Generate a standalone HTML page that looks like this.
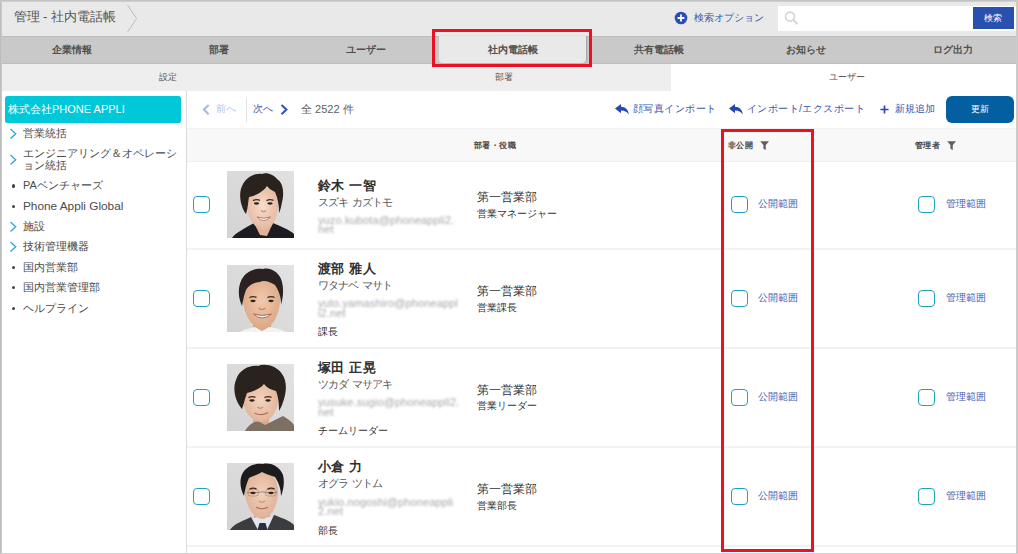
<!DOCTYPE html>
<html lang="ja">
<head>
<meta charset="utf-8">
<title>管理 - 社内電話帳</title>
<style>
*{box-sizing:border-box;margin:0;padding:0}
html,body{width:1018px;height:554px;overflow:hidden;background:#fff}
body{position:relative;font-family:"Liberation Sans",sans-serif;color:#444;font-size:12px;line-height:1}
.abs{position:absolute;white-space:nowrap}
a{text-decoration:none;color:inherit}
/* frame */
#f-l{left:0;top:0;width:2px;height:554px;background:linear-gradient(90deg,#bdbdbd 0,#bdbdbd 55%,#d8d8d8 100%)}
#f-t{left:0;top:0;width:1018px;height:2px;background:linear-gradient(180deg,#c2c2c2 0,#c2c2c2 50%,#dcdcdc 100%)}
#f-r{left:1016px;top:0;width:2px;height:554px;background:linear-gradient(90deg,#d4d4d4,#bdbdbd)}
#f-b{left:0;top:553px;width:1018px;height:1px;background:#d0d0d0}
/* header */
#hdr{left:2px;top:1px;width:1014px;height:36px;background:#e9e9e9}
#title{left:13.5px;top:10px;font-size:13px;color:#555;letter-spacing:0}
#sbox{left:778px;top:5.7px;width:238px;height:25.4px;background:#fff}
#sbtn{left:973px;top:7px;width:40.8px;height:21.8px;background:#2850ae;color:#fff;font-size:9px;text-align:center;line-height:22.6px}
#sopt{left:694px;top:12.5px;font-size:10px;color:#3355aa}
/* nav */
#nav{left:2px;top:36.4px;width:1014px;height:27.6px;background:#c9c9c9;border-top:1px solid #bcbcbc;border-bottom:1px solid #bebebe}
.tab{top:37px;height:26px;line-height:26px;font-size:10px;font-weight:bold;color:#505050;text-align:center}
#tab-act{left:438.7px;top:36px;width:147.8px;height:27px;background:#e9e9e9;border-radius:0 0 4px 4px;box-shadow:1px 0 1.5px rgba(0,0,0,.2)}
/* subnav */
#sub{left:2px;top:64px;width:1014px;height:27px;background:#eeeeee}
#sub-act{left:671px;top:64px;width:345px;height:27px;background:#fff}
.stab{top:63px;height:28px;line-height:28px;font-size:9px;color:#555;text-align:center}
/* sidebar */
#side-b{left:186px;top:91px;width:1px;height:463px;background:#dcdcdc}
#org{left:5px;top:96px;width:176px;height:27px;background:#00c8d8;color:#fff;font-size:11px;line-height:27px;padding-left:3px;border-radius:2.5px}
.ti{left:23px;font-size:11px;color:#4a4a4a}
.chev{left:8px;width:8px;height:10px}
.dot{left:11.5px;width:3.6px;height:3.6px;border-radius:50%;background:#444}
/* toolbar */
.lnk{color:#3a55ad;font-size:10.45px}
#upd{left:945.6px;top:95.8px;width:68.3px;height:27.3px;background:#035f9f;border-radius:6px;color:#fff;font-size:8.5px;text-align:center;line-height:27.3px}
/* table */
#thead{left:187px;top:128px;width:829px;height:34px;background:#f8f8f8;border-top:1px solid #f1f1f1;border-bottom:1px solid #efefef}
.th{top:141.4px;font-size:8.3px;letter-spacing:0.4px;font-weight:bold;color:#484848}
.sep{left:187px;width:829px;height:2px;background:#f2f2f2}
.cb{width:17.2px;height:17px;border:1.4px solid #22a2c0;border-radius:4px;background:#fff}
.ph{left:227px;width:67px;height:67px;overflow:hidden}
.nm{left:318px;font-size:13.4px;letter-spacing:0.45px;font-weight:bold;color:#303030}
.kn{left:317.5px;font-size:10.5px;letter-spacing:-0.85px;word-spacing:1.5px;color:#555}
.em{left:318px;font-size:11px;color:#a6a6a6;filter:blur(1.1px);line-height:9.8px;white-space:nowrap;letter-spacing:0.12px}
.jt{left:318px;font-size:10px;color:#333}
.dp{left:477px;font-size:12px;color:#333}
.ds{left:477px;font-size:10.2px;color:#333}
.rl{font-size:10px;color:#4560b4}
.red{border:3px solid #ec1020}
</style>
</head>
<body>
<div class="abs" id="hdr"></div>
<div class="abs" id="title">管理 - 社内電話帳</div>
<svg class="abs" style="left:126px;top:4px" width="14" height="30" viewBox="0 0 14 30"><path d="M1.5 1 L10.6 14.5 L1.5 28" fill="none" stroke="#bdbdbd" stroke-width="1"/></svg>
<svg class="abs" style="left:674px;top:11px" width="14" height="14" viewBox="0 0 14 14"><circle cx="7" cy="7" r="6.3" fill="#2a4db3"/><path d="M7 3.6v6.8M3.6 7h6.8" stroke="#fff" stroke-width="1.8"/></svg>
<a class="abs" id="sopt">検索オプション</a>
<div class="abs" id="sbox"></div>
<svg class="abs" style="left:784px;top:10px" width="16" height="16" viewBox="0 0 16 16"><circle cx="6" cy="6.6" r="4.5" fill="none" stroke="#d4d4d4" stroke-width="1.6"/><path d="M9.4 10l4.2 4.2" stroke="#d4d4d4" stroke-width="1.8"/></svg>
<div class="abs" id="sbtn">検索</div>

<div class="abs" id="nav"></div>
<div class="abs" id="tab-act"></div>
<div class="abs tab" style="left:0px;width:144px">企業情報</div>
<div class="abs tab" style="left:146px;width:146px">部署</div>
<div class="abs tab" style="left:292.5px;width:146px">ユーザー</div>
<div class="abs tab" style="left:438px;width:149px">社内電話帳</div>
<div class="abs tab" style="left:585.5px;width:146px">共有電話帳</div>
<div class="abs tab" style="left:733px;width:146px">お知らせ</div>
<div class="abs tab" style="left:880.5px;width:144px">ログ出力</div>

<div class="abs" id="sub"></div>
<div class="abs" id="sub-act"></div>
<div class="abs stab" style="left:0;width:336px">設定</div>
<div class="abs stab" style="left:336px;width:336px">部署</div>
<div class="abs stab" style="left:672px;width:350px">ユーザー</div>

<!-- sidebar -->
<div class="abs" id="side-b"></div>
<div class="abs" id="org">株式会社PHONE APPLI</div>
<svg class="abs" style="left:8.7px;top:127.70000000000002px" width="8.5" height="11.6" viewBox="-1 -1 8.5 11.6"><path d="M0.5 0 L5.7 4.8 L0.5 9.6" fill="none" stroke="#35a8dc" stroke-width="1.4" stroke-linejoin="miter"/></svg>
<div class="abs ti" style="top:127.8px">営業統括</div>
<svg class="abs" style="left:8.7px;top:154.25000000000003px" width="8.5" height="11.6" viewBox="-1 -1 8.5 11.6"><path d="M0.5 0 L5.7 4.8 L0.5 9.6" fill="none" stroke="#35a8dc" stroke-width="1.4" stroke-linejoin="miter"/></svg>
<div class="abs ti" style="top:148.4px">エンジニアリング＆オペレーシ</div>
<div class="abs ti" style="top:160.3px">ョン統括</div>
<div class="abs dot" style="top:184.2px"></div>
<div class="abs ti" style="top:180.3px">PAベンチャーズ</div>
<div class="abs dot" style="top:204.7px"></div>
<div class="abs ti" style="top:200.8px"><span style="font-size:11.8px">Phone Appli Global</span></div>
<svg class="abs" style="left:8.7px;top:221.1px" width="8.5" height="11.6" viewBox="-1 -1 8.5 11.6"><path d="M0.5 0 L5.7 4.8 L0.5 9.6" fill="none" stroke="#35a8dc" stroke-width="1.4" stroke-linejoin="miter"/></svg>
<div class="abs ti" style="top:221.2px">施設</div>
<svg class="abs" style="left:8.7px;top:241.0px" width="8.5" height="11.6" viewBox="-1 -1 8.5 11.6"><path d="M0.5 0 L5.7 4.8 L0.5 9.6" fill="none" stroke="#35a8dc" stroke-width="1.4" stroke-linejoin="miter"/></svg>
<div class="abs ti" style="top:241.1px">技術管理機器</div>
<div class="abs dot" style="top:265.5px"></div>
<div class="abs ti" style="top:261.6px">国内営業部</div>
<div class="abs dot" style="top:285.9px"></div>
<div class="abs ti" style="top:282.0px">国内営業管理部</div>
<div class="abs dot" style="top:306.5px"></div>
<div class="abs ti" style="top:302.6px">ヘルプライン</div>

<!-- toolbar -->

<svg class="abs" style="left:202.3px;top:103.7px" width="8.2" height="11.2" viewBox="-1 -1 8.2 11.2"><path d="M5.7 0 L0.8 4.6 L5.7 9.2" fill="none" stroke="#aab6e2" stroke-width="2.0" stroke-linejoin="miter"/></svg>
<a class="abs lnk" style="left:216px;top:104.3px;color:#b7c2e7">前へ</a>
<div class="abs" style="left:245.5px;top:98px;width:1px;height:24px;background:#e2e2e2"></div>
<a class="abs lnk" style="left:253px;top:104.3px">次へ</a>
<svg class="abs" style="left:279.8px;top:103.7px" width="8.2" height="11.2" viewBox="-1 -1 8.2 11.2"><path d="M0.5 0 L5.4 4.6 L0.5 9.2" fill="none" stroke="#3355bb" stroke-width="2.1" stroke-linejoin="miter"/></svg>
<div class="abs" style="left:301px;top:103.5px;font-size:11px;color:#606060">全 2522 件</div>
<svg class="abs" style="left:615px;top:104.3px" width="14" height="11" viewBox="0 0 14 11"><path d="M0 4.6 L6 0 V2.7 C10.5 2.9 13.4 5.6 13.8 10.6 C12 7.6 9.6 6.5 6 6.5 V9.2 Z" fill="#2448b0"/></svg>
<a class="abs lnk" style="left:633px;top:104.3px;letter-spacing:0.42px">顔写真インポート</a>
<svg class="abs" style="left:729px;top:104.3px" width="14" height="11" viewBox="0 0 14 11"><path d="M0 4.6 L6 0 V2.7 C10.5 2.9 13.4 5.6 13.8 10.6 C12 7.6 9.6 6.5 6 6.5 V9.2 Z" fill="#2448b0"/></svg>
<a class="abs lnk" style="left:746.5px;top:104.3px;letter-spacing:0.5px">インポート/エクスポート</a>
<svg class="abs" style="left:879.5px;top:104.8px" width="9" height="9" viewBox="0 0 9 9"><path d="M4.5 0.4v8.2M0.4 4.5h8.2" stroke="#2d48a8" stroke-width="1.7"/></svg>
<a class="abs lnk" style="left:895px;top:104.3px;font-size:10.1px">新規追加</a>

<div class="abs" id="upd">更新</div>

<!-- table -->
<div class="abs" id="thead"></div>
<div class="abs th" style="left:474px">部署・役職</div>
<div class="abs th" style="left:728px">非公開</div>
<div class="abs th" style="left:915px">管理者</div>
<svg class="abs" style="left:759.6px;top:140.9px" width="9.2" height="9.2" viewBox="0 0 10 10"><path d="M0.2 0.2h9.6L6.3 4.4V9.8L3.7 8.4V4.4Z" fill="#606060"/></svg><svg class="abs" style="left:946.6px;top:140.9px" width="9.2" height="9.2" viewBox="0 0 10 10"><path d="M0.2 0.2h9.6L6.3 4.4V9.8L3.7 8.4V4.4Z" fill="#606060"/></svg>
<div class="abs cb" style="left:192.8px;top:195.8px"></div>
<div class="abs ph" style="top:171px"><svg width="67" height="67" viewBox="0 0 67 67"><defs><filter id="bl0" x="-10%" y="-10%" width="120%" height="120%"><feGaussianBlur stdDeviation="0.7"/></filter><linearGradient id="bg0" x1="1" y1="0" x2="0" y2="1"><stop offset="0" stop-color="#e1e1e1"/><stop offset="1" stop-color="#d3d3d3"/></linearGradient><radialGradient id="sk0" cx="0.5" cy="0.45" r="0.6"><stop offset="0" stop-color="#f8dccb"/><stop offset="1" stop-color="#e3b59c"/></radialGradient></defs><rect width="67" height="67" fill="url(#bg0)"/><g filter="url(#bl0)"><path d="M28 50 h16 v16 h-16z" fill="#e0b297"/><path d="M5 67 C9 61 19 57 27 52 L33 64 L40 65 L46 52 C55 56 63 59 67 63 V67Z" fill="#1b1c24"/><path d="M20 34 C19 22 26 16 36 16 C46 16 52 22 51 35 C51 46 45 59 36.5 59 C29 59 20 47 20 34Z" fill="url(#sk0)"/><path d="M19 43 C14 36 11 24 15 15 C19 6 28 2 35 3 C40 1 47 4 50 8 C57 12 57 24 55 31 C54 37 53 40 52 42 C52 34 51 28 48 21 C45 19 42 18 40 15 C36 21 28 25 22 26 C21 31 21 37 19 43Z" fill="#2a211f"/><path d="M26.0 29.6 Q29.5 27.8 33.0 29.4" stroke="#3a2a22" stroke-width="1.2" fill="none"/><path d="M39.5 29.6 Q43 27.8 46.5 29.4" stroke="#3a2a22" stroke-width="1.2" fill="none"/><ellipse cx="29.5" cy="32.5" rx="2.7" ry="1.15" fill="#2e201a"/><ellipse cx="43" cy="32.5" rx="2.7" ry="1.15" fill="#2e201a"/><path d="M30 46 Q36.5 53 43.5 46 Q36.5 48.5 30 46Z" fill="#fff" stroke="#b0705f" stroke-width="0.9"/><path d="M34 39.5 q2.5 2.5 5 0" stroke="#c48f74" stroke-width="1.1" fill="none"/></g></svg></div>
<div class="abs nm" style="top:179.3px">鈴木 一智</div>
<div class="abs kn" style="top:196.7px">スズキ カズトモ</div>
<div class="abs em" style="top:215.5px;width:134px">yuzo.kubota@phoneappli2.<br>net</div>
<div class="abs dp" style="top:190.6px">第一営業部</div>
<div class="abs ds" style="top:208.9px">営業マネージャー</div>
<div class="abs cb" style="left:730.8px;top:195.8px"></div>
<a class="abs rl" style="left:757.5px;top:199.2px">公開範囲</a>
<div class="abs cb" style="left:917.8px;top:195.8px"></div>
<a class="abs rl" style="left:945.5px;top:199.2px">管理範囲</a>
<div class="abs cb" style="left:192.8px;top:290.0px"></div>
<div class="abs ph" style="top:265px"><svg width="67" height="67" viewBox="0 0 67 67"><defs><filter id="bl1" x="-10%" y="-10%" width="120%" height="120%"><feGaussianBlur stdDeviation="0.7"/></filter><linearGradient id="bg1" x1="1" y1="0" x2="0" y2="1"><stop offset="0" stop-color="#e3e3e3"/><stop offset="1" stop-color="#d3d3d3"/></linearGradient><radialGradient id="sk1" cx="0.5" cy="0.45" r="0.6"><stop offset="0" stop-color="#f2c9ac"/><stop offset="1" stop-color="#d9a684"/></radialGradient></defs><rect width="67" height="67" fill="url(#bg1)"/><g filter="url(#bl1)"><path d="M26 55 h18 v12 h-18z" fill="#d5a483"/><path d="M13 67 C18 64 24 63 28 62 L35 66 L42 62 C48 63 54 64 59 67Z" fill="#f4f2ee"/><path d="M16 36 C15 22 24 13 35 13 C46 13 54 22 53 37 C52 50 45 64 35 64 C26 64 17 50 16 36Z" fill="url(#sk1)"/><path d="M15 41 C10 31 11 18 17 11 C22 5 30 3 36 4 C44 2 53 8 55 17 C57 25 56 33 54 40 C54 32 52 26 48 20 C42 16 36 15 33 17 C28 17 22 20 19 25 C17 30 16 35 15 41Z" fill="#2b2320"/><path d="M22.5 32.6 Q26 30.8 29.5 32.4" stroke="#3a2a22" stroke-width="1.2" fill="none"/><path d="M40.5 32.6 Q44 30.8 47.5 32.4" stroke="#3a2a22" stroke-width="1.2" fill="none"/><ellipse cx="26" cy="36" rx="2.7" ry="1.15" fill="#2e201a"/><ellipse cx="44" cy="36" rx="2.7" ry="1.15" fill="#2e201a"/><path d="M26.5 49 Q35 57 44.5 49 Q35 52 26.5 49Z" fill="#fff" stroke="#a86a5a" stroke-width="1"/><path d="M31.5 43 q3.5 3 7 0" stroke="#b98467" stroke-width="1.2" fill="none"/></g></svg></div>
<div class="abs nm" style="top:262.0px">渡部 雅人</div>
<div class="abs kn" style="top:280.1px">ワタナベ マサト</div>
<div class="abs em" style="top:299.4px;width:140px">yuto.yamashiro@phoneappl<br>i2.net</div>
<div class="abs jt" style="top:327.3px">課長</div>
<div class="abs dp" style="top:284.9px">第一営業部</div>
<div class="abs ds" style="top:302.6px">営業課長</div>
<div class="abs cb" style="left:730.8px;top:290.0px"></div>
<a class="abs rl" style="left:757.5px;top:293.4px">公開範囲</a>
<div class="abs cb" style="left:917.8px;top:290.0px"></div>
<a class="abs rl" style="left:945.5px;top:293.4px">管理範囲</a>
<div class="abs cb" style="left:192.8px;top:388.8px"></div>
<div class="abs ph" style="top:364px"><svg width="67" height="67" viewBox="0 0 67 67"><defs><filter id="bl2" x="-10%" y="-10%" width="120%" height="120%"><feGaussianBlur stdDeviation="0.7"/></filter><linearGradient id="bg2" x1="1" y1="0" x2="0" y2="1"><stop offset="0" stop-color="#e2e2e2"/><stop offset="1" stop-color="#d3d3d3"/></linearGradient><radialGradient id="sk2" cx="0.5" cy="0.45" r="0.6"><stop offset="0" stop-color="#f5d3bd"/><stop offset="1" stop-color="#e0b197"/></radialGradient></defs><rect width="67" height="67" fill="url(#bg2)"/><g filter="url(#bl2)"><path d="M26 50 h16 v14 h-16z" fill="#d9aa8c"/><path d="M18 67 C22 60 27 58 31 57 L38 61 C44 58 50 55 56 52 C61 55 65 58 67 61 V67Z" fill="#7b6f65"/><path d="M16 37 C15 26 22 18 33 18 C44 18 52 25 51 38 C50 48 43 58 34 58 C25 58 17 48 16 37Z" fill="url(#sk2)"/><path d="M15 45 C9 38 5 26 9 16 C12 6 22 1 31 2 C38 -1 50 2 55 10 C61 18 59 30 56 38 C55 42 53 45 52 47 C52 38 51 32 49 27 C45 26 40 24 37 20 C33 25 25 28 20 29 C18 34 17 39 15 45Z" fill="#2a201c"/><path d="M21.5 33.6 Q25 31.8 28.5 33.4" stroke="#3a2a22" stroke-width="1.2" fill="none"/><path d="M37.5 33.6 Q41 31.8 44.5 33.4" stroke="#3a2a22" stroke-width="1.2" fill="none"/><ellipse cx="25" cy="36.5" rx="2.7" ry="1.15" fill="#2e201a"/><ellipse cx="41" cy="36.5" rx="2.7" ry="1.15" fill="#2e201a"/><path d="M27.5 49 Q34 52.5 41 48.5" stroke="#b0705f" stroke-width="1.3" fill="none"/><path d="M30.5 43 q2.8 2.6 5.6 0" stroke="#c48f74" stroke-width="1.1" fill="none"/></g></svg></div>
<div class="abs nm" style="top:361.0px">塚田 正晃</div>
<div class="abs kn" style="top:379.2px">ツカダ マサアキ</div>
<div class="abs em" style="top:398.2px;width:138px">yusuke.sugio@phoneappli2.<br>net</div>
<div class="abs jt" style="top:426.0px">チームリーダー</div>
<div class="abs dp" style="top:383.7px">第一営業部</div>
<div class="abs ds" style="top:401.2px">営業リーダー</div>
<div class="abs cb" style="left:730.8px;top:388.8px"></div>
<a class="abs rl" style="left:757.5px;top:392.2px">公開範囲</a>
<div class="abs cb" style="left:917.8px;top:388.8px"></div>
<a class="abs rl" style="left:945.5px;top:392.2px">管理範囲</a>
<div class="abs cb" style="left:192.8px;top:487.8px"></div>
<div class="abs ph" style="top:462.5px"><svg width="67" height="67" viewBox="0 0 67 67"><defs><filter id="bl3" x="-10%" y="-10%" width="120%" height="120%"><feGaussianBlur stdDeviation="0.7"/></filter><linearGradient id="bg3" x1="1" y1="0" x2="0" y2="1"><stop offset="0" stop-color="#e2e2e4"/><stop offset="1" stop-color="#d3d3d3"/></linearGradient><radialGradient id="sk3" cx="0.5" cy="0.45" r="0.6"><stop offset="0" stop-color="#f4d0ba"/><stop offset="1" stop-color="#dcae94"/></radialGradient></defs><rect width="67" height="67" fill="url(#bg3)"/><g filter="url(#bl3)"><path d="M27 48 h16 v12 h-16z" fill="#d8a88c"/><path d="M22 57 L35 52 L50 56 L42 67 H28Z" fill="#e3e6ef"/><path d="M32.5 60 h6 l2 7 h-10z" fill="#2b2d3c"/><path d="M3 67 C8 60 16 58 24 54 L31 67Z M40 67 L47 52 C55 55 62 57 67 62 V67Z" fill="#3b3b40"/><path d="M18 30 C17 18 24 9 35 9 C46 9 52 18 51 31 C50 43 44 56 35 56 C27 56 19 43 18 30Z" fill="url(#sk3)"/><path d="M17 33 C12 24 12 12 19 6 C24 1 32 0 36 1 C44 -1 53 4 56 12 C58 20 56 28 54 33 C54 26 52 20 48 14 C43 12 38 11 35 9 C31 12 25 13 22 15 C19 21 18 27 17 33Z" fill="#1d1a1a"/><path d="M20 29.5 h11.5 M38.5 29.5 h11.5 M31.5 29.5 q3.5 -1.5 7 0" stroke="#8a776c" stroke-width="0.8" fill="none"/><rect x="21" y="26.5" width="10.5" height="6.5" rx="2.5" fill="none" stroke="#9a877c" stroke-width="0.6"/><rect x="38.5" y="26.5" width="10.5" height="6.5" rx="2.5" fill="none" stroke="#9a877c" stroke-width="0.6"/><path d="M22.5 26.1 Q26 24.3 29.5 25.9" stroke="#3a2a22" stroke-width="1.2" fill="none"/><path d="M40.5 26.1 Q44 24.3 47.5 25.9" stroke="#3a2a22" stroke-width="1.2" fill="none"/><ellipse cx="26" cy="30" rx="2.7" ry="1.15" fill="#2e201a"/><ellipse cx="44" cy="30" rx="2.7" ry="1.15" fill="#2e201a"/><path d="M29 44 Q35 47.5 41 44" stroke="#b0705f" stroke-width="1.2" fill="none"/><path d="M32 38 q3 2.5 6 0" stroke="#c4927a" stroke-width="1.1" fill="none"/></g></svg></div>
<div class="abs nm" style="top:460.2px">小倉 力</div>
<div class="abs kn" style="top:478.0px">オグラ ツトム</div>
<div class="abs em" style="top:497.5px;width:133px">yukio.nogoshi@phoneappli<br>2.net</div>
<div class="abs jt" style="top:526.0px">部長</div>
<div class="abs dp" style="top:483.0px">第一営業部</div>
<div class="abs ds" style="top:500.5px">営業部長</div>
<div class="abs cb" style="left:730.8px;top:487.8px"></div>
<a class="abs rl" style="left:757.5px;top:491.2px">公開範囲</a>
<div class="abs cb" style="left:917.8px;top:487.8px"></div>
<a class="abs rl" style="left:945.5px;top:491.2px">管理範囲</a>
<div class="abs sep" style="top:248px"></div>
<div class="abs sep" style="top:347.2px"></div>
<div class="abs sep" style="top:445.8px"></div>
<div class="abs sep" style="top:545px"></div>

<div class="abs red" style="left:432.3px;top:29px;width:159.8px;height:38px"></div>
<div class="abs red" style="left:721px;top:129px;width:93px;height:423px"></div>

<div class="abs" id="f-l"></div><div class="abs" id="f-t"></div><div class="abs" id="f-r"></div><div class="abs" id="f-b"></div>
</body>
</html>
